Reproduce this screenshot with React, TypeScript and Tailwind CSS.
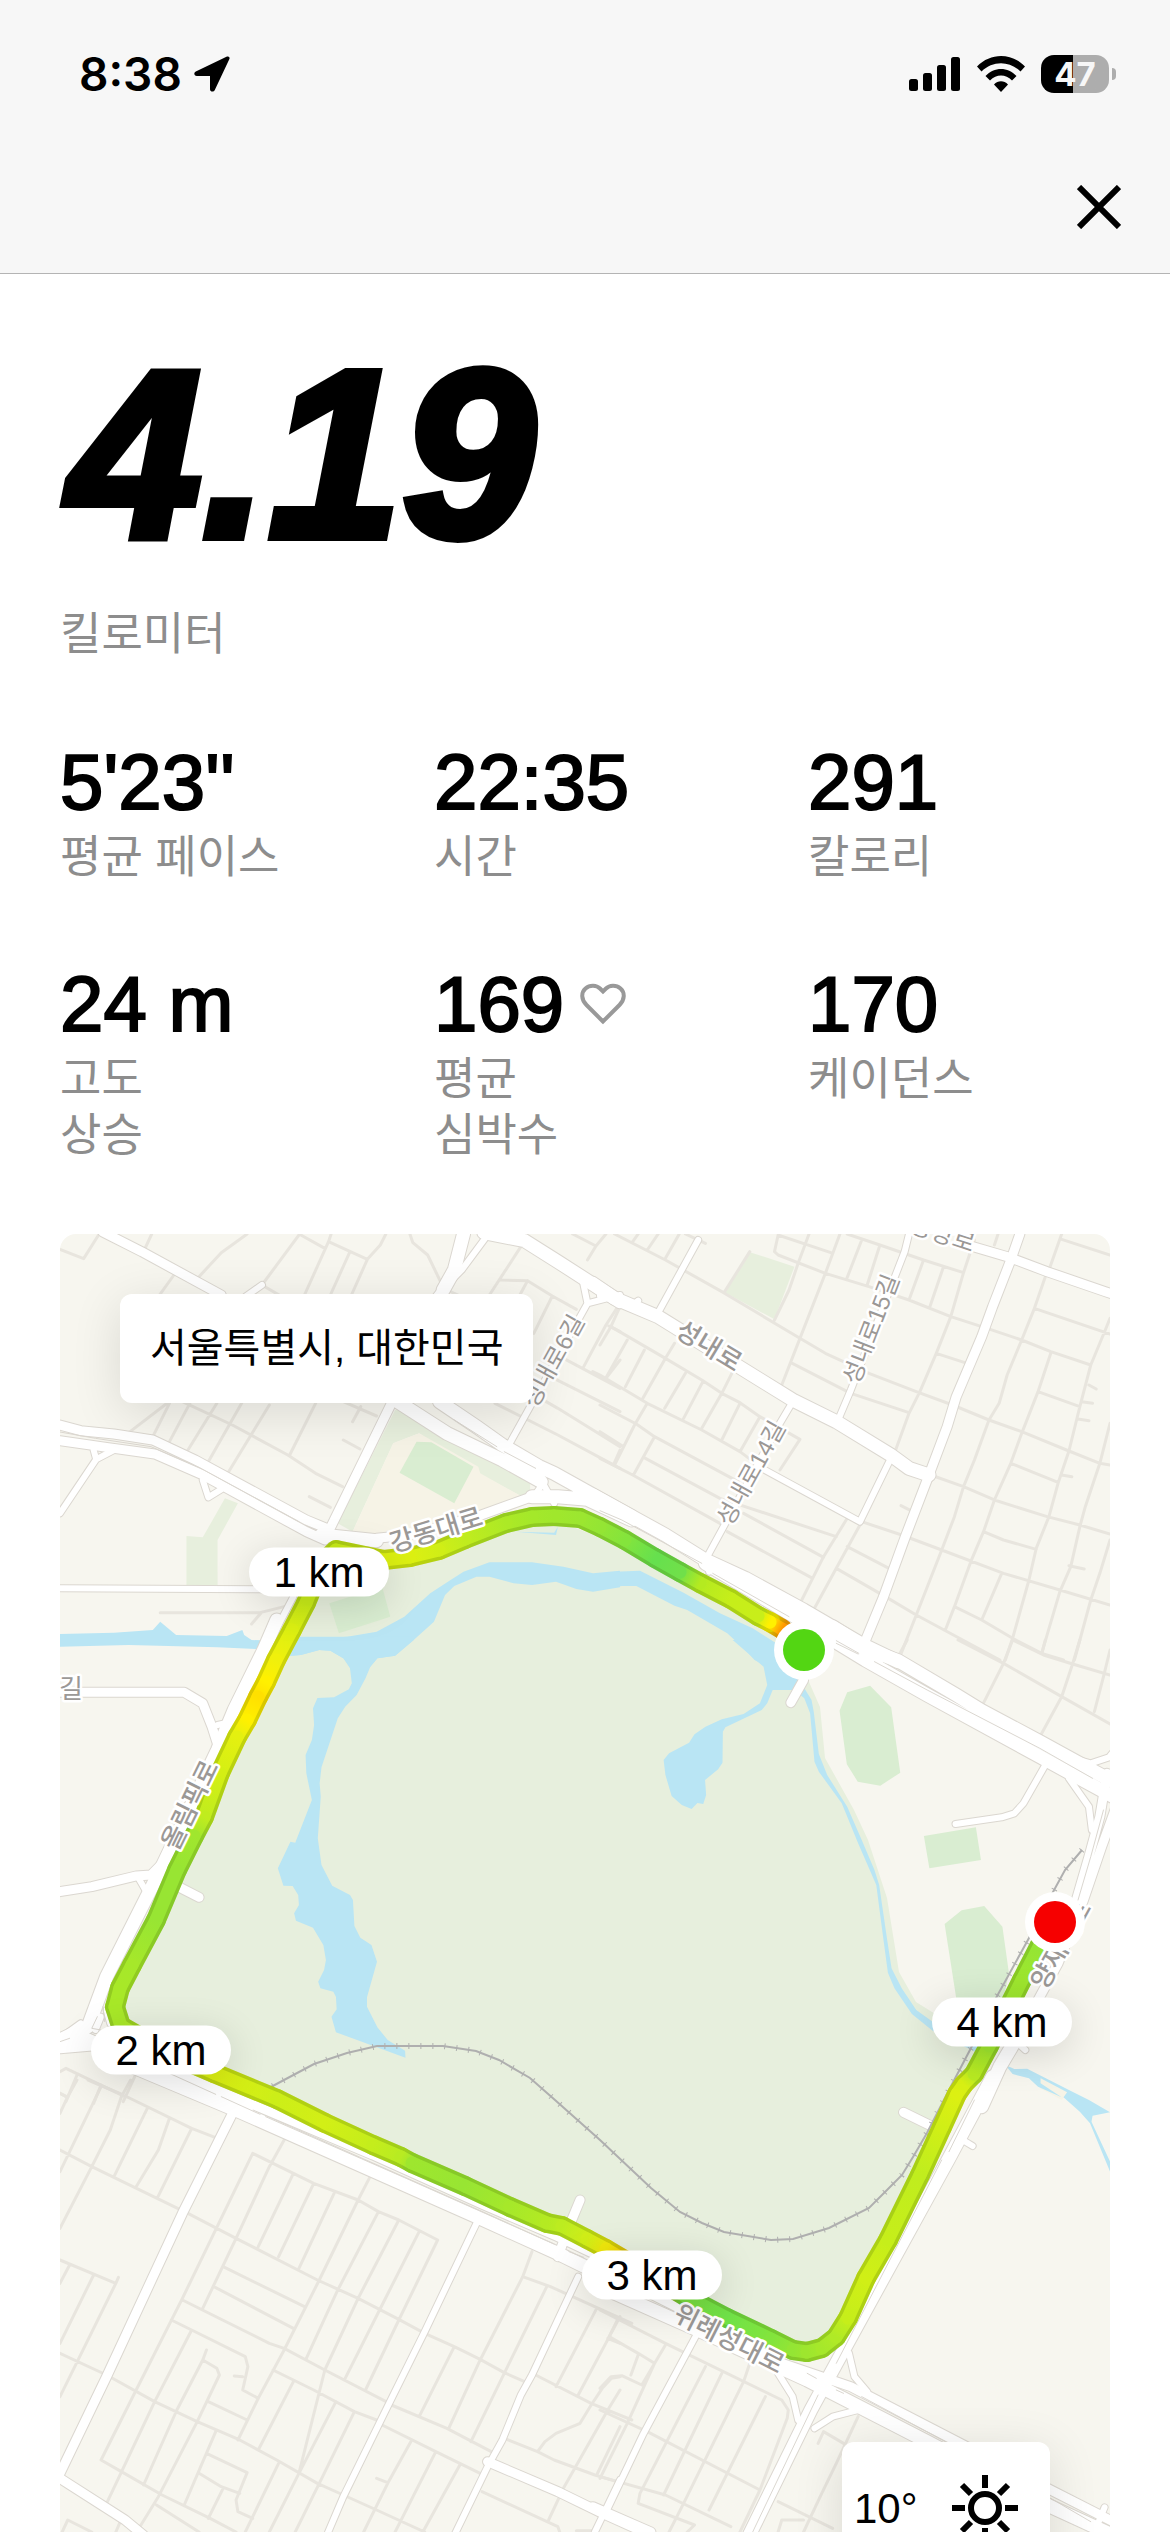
import type { ReactNode } from 'react';

interface Stat {
  value: string;
  label: string[];
  heart?: boolean;
}

interface Tile {
  id: string;
  transform: string;
  park?: string;
  sand?: string;
  field?: string;
  water?: string;
  lane: string;
  small: string;
  medium: string;
  large: string;
  divider?: string;
}

interface RoadLabel {
  text: string;
  x: number;
  y: number;
  angle: number;
  size: number;
  bold?: boolean;
}

const MAP_LEFT = 60;
const MAP_TOP = 1234;
const MAP_WIDTH = 1050;
const MAP_HEIGHT = 1298;

const stats: Stat[] = [
  { value: "5'23''", label: ['평균 페이스'] },
  { value: '22:35', label: ['시간'] },
  { value: '291', label: ['칼로리'] },
  { value: '24 m', label: ['고도', '상승'] },
  { value: '169', label: ['평균', '심박수'], heart: true },
  { value: '170', label: ['케이던스'] },
];

// Each tile keeps its own coordinate system
const tiles: Tile[] = [
  {
    id: 'nw',
    transform: 'translate(40 1220) scale(0.3699 0.33333)',
    park: 'M960,570 1030,575 1100,630 1230,710 1325,775 1325,815 1300,828 1185,760 1025,640 955,670 845,935 805,910Z M500,835 535,850 480,960 480,1095 396,1095 396,948 440,952Z',
    sand: 'M1025,640 1185,740 1190,760 1300,828 1180,880 1000,940 860,940 845,935 955,670Z',
    field: 'M1018,665 1058,667 1172,740 1120,850 972,758Z M782,1150 925,1100 947,1190 808,1240Z',
    water:
      'M54,1242 200,1238 305,1230 325,1205 368,1245 505,1248 547,1230 552,1245 572,1260 660,1263 830,1250 910,1235 985,1190 1055,1120 1110,1080 1145,1055 1215,1027 1330,1027 1415,1040 1495,1060 1568,1052 1568,1102 1495,1115 1450,1107 1395,1085 1330,1095 1280,1090 1215,1070 1180,1070 1120,1098 1095,1125 1065,1205 1008,1262 960,1307 912,1315 893,1340 840,1340 820,1315 785,1292 755,1290 705,1305 670,1308 605,1288 480,1282 240,1275 54,1280Z M1285,935 1390,938 1400,920 1395,945Z',
    lane:
      'M54,88 118,116 160,42 M560,42 490,98 420,182 M302,42 282,90 M362,165 320,230 M702,42 600,195 700,260 M705,45 770,85 M787,42 780,65 715,225 M780,65 885,118 M935,42 920,75 885,118 842,225 M838,95 785,225 M1000,42 1008,68 1048,105 1085,190 M1090,205 1130,225 M1300,80 1215,225 M1245,180 1318,182 1385,228 1450,268 M1318,182 1280,260 M1385,228 1335,340 M1440,42 1503,78 1530,42 M1503,78 1480,120 M1568,250 1530,315 1470,440 M1538,318 1568,335 M1568,420 1530,475 M1390,400 1568,505 M1380,470 1568,575 M1345,530 1400,565 1568,680 M1230,550 1400,645 1568,745 M1568,690 1550,735 M355,540 240,638 M350,550 305,650 M405,550 350,665 M478,550 400,690 M545,550 455,725 M620,555 510,755 M745,550 675,705 M385,545 520,615 670,705 M670,705 745,760 818,800 M845,605 867,560 M820,545 910,588 M820,660 865,687 M728,830 785,862 M325,1178 595,1178 660,1160 M598,1178 572,1212',
    small:
      'M555,230 600,195 M1100,195 1140,150 1210,45 M1465,170 1480,250 1568,225 M1480,250 1390,430 1270,670 M54,880 152,718 M145,690 152,718 200,690 M440,780 455,832 490,808 M1360,790 1335,830 M1360,790 1390,850 M54,1105 610,1108 M685,1130 595,1320',
    medium:
      'M170,36 275,95 490,225 M54,615 110,632 200,642 305,660 420,720 720,900 775,925 M54,662 180,682 310,702 440,765 720,935 770,960 M1085,215 950,550 780,935 M1060,250 1085,215 M910,955 1000,945 1180,890 1330,830',
    large:
      'M1090,210 1120,150 1145,42 M1200,38 1310,62 1400,125 1568,245 M960,540 1100,640 1250,720 1355,785 M1080,545 1180,620 1250,675 1350,740 1390,760 1600,890 M760,945 910,962 M1330,830 1400,830 1480,838 1600,900',
    divider: 'M54,636 150,655 300,680 430,742 700,905 M1120,600 1235,680 M1255,695 1340,745',
  },
  {
    id: 'ne',
    transform: 'translate(600 1220) scale(0.36352 0.33333)',
    park: 'M408,95 535,140 480,298 345,218Z',
    water:
      'M-20,1062 0,1067 40,1055 110,1052 230,1118 330,1180 420,1225 500,1280 500,1360 460,1340 425,1320 400,1290 350,1240 240,1170 205,1157 100,1098 60,1098 -20,1112Z',
    lane:
      'M40,42 180,120 340,218 550,355 620,400 740,460 870,515 970,555 1070,600 1160,635 1290,693 1375,730 1403,735 M105,42 90,65 M160,42 130,90 M218,42 180,115 M235,42 290,70 M412,95 343,215 M575,42 545,130 520,210 480,300 M490,45 635,98 M490,45 480,95 490,105 620,160 740,200 850,240 965,290 1065,325 1160,360 1240,395 1350,435 M660,42 620,160 550,355 500,495 M680,42 770,75 890,120 1000,158 M720,60 678,178 M770,75 735,195 M890,120 850,240 M945,140 907,262 M1030,60 1000,158 965,290 925,400 880,515 850,580 810,700 M525,428 690,520 850,578 M925,400 1010,430 M1095,42 1085,75 M1270,42 1235,150 M1270,58 1403,105 M1225,170 1195,265 1160,360 1120,465 1098,550 1070,600 1030,720 1000,800 975,890 940,990 870,1185 825,1310 M1195,265 1403,342 M1403,295 1390,330 1350,435 1320,560 1290,693 1260,790 1235,890 1200,985 1180,1080 1135,1255 1115,1320 M1240,400 1205,515 1160,640 1130,730 1085,840 1055,935 1020,1025 975,1160 950,1230 M1205,515 1320,560 M1130,730 1260,787 M1055,935 1110,960 1200,988 M1345,495 1365,507 M1325,545 1355,550 M1315,597 1345,602 M1270,765 1298,770 M1290,1037 1332,1047 M1403,610 1375,730 1335,860 1320,920 1295,1040 1265,1115 1215,1300 M910,765 1000,800 1085,840 1230,890 1320,915 1403,942 M720,905 830,945 940,990 1110,1060 1265,1110 1403,1155 M1105,1060 1050,1200 M1403,960 1375,1060 1350,1140 1305,1320 M975,1160 1050,1200 1135,1255 1215,1300 1275,1320 M785,1130 870,1185 1100,1320 M680,980 795,1045 M650,1045 785,1130 M680,895 615,1010 555,1140 M715,915 650,1045 590,1165 M828,857 855,872 M55,260 30,320 0,375 M30,320 180,415 280,480 335,520 385,548 440,590 550,658 495,750 M75,360 18,470 M122,390 70,500 M205,370 180,415 118,535 M235,460 178,565 M283,485 230,595 M365,455 335,520 280,625 M385,550 335,660 M440,590 385,695 M-20,455 0,465 130,550 280,630 385,695 440,740 M130,550 95,615 40,735 M0,555 100,612 150,650 380,785 M0,635 65,680 M150,650 92,765 M125,715 330,835 650,950 M0,715 90,765 330,910 M395,880 615,1012 M350,935 585,1075',
    small:
      'M270,60 158,282 M105,242 90,255 M530,545 495,610 295,1010 300,1055 M440,742 715,905 800,715 M850,42 838,95 690,510 655,600 M0,228 40,225',
    medium:
      'M1155,42 1130,120 1080,260 1050,350 980,530 955,620 905,765 840,950 780,1130 725,1275 M1020,78 1120,110 1230,155 1390,215 1410,222',
    large:
      'M-20,190 40,235 160,290 530,540 650,605 800,705 850,745 905,765 M-20,825 180,945 290,1020 400,1075 560,1170 725,1275 820,1325 M290,1030 520,1180 700,1290 760,1330',
    divider: 'M0,872 60,900 280,1030 M310,1060 520,1190 M650,1262 712,1300',
  },
  {
    id: 'w',
    transform: 'translate(40 1640) scale(0.3699 0.33333)',
    water:
      'M605,-10 605,28 670,48 705,45 755,30 785,32 820,55 838,85 843,130 835,148 795,172 750,174 738,205 741,255 735,300 718,345 720,400 735,480 690,608 677,605 643,685 658,737 683,738 698,765 700,795 687,820 692,842 738,863 766,915 773,960 768,990 752,1025 758,1045 793,1055 800,1070 802,1108 788,1130 800,1177 988,1253 987,1232 940,1200 912,1162 884,1100 884,1072 911,965 896,915 866,893 850,858 846,780 838,765 790,737 761,675 751,595 759,470 756,430 761,382 805,235 825,200 856,165 880,115 893,80 912,55 960,47 1010,0 1010,-10Z',
    lane: 'M54,1295 70,1285 230,1370 M100,1305 70,1385 M260,1300 225,1385 M165,1335 145,1390 M54,1360 75,1372',
    small: 'M480,255 520,245 M265,712 290,760 M150,1170 165,1130 M54,1195 110,1150 M180,1110 190,1150',
    medium:
      'M54,157 390,157 440,190 465,260 485,330 M54,755 140,740 260,708 300,705 340,660 M365,735 430,772',
    large:
      'M640,-60 605,30 525,210 480,330 330,680 180,1010 130,1160 54,1200 M54,1220 140,1212 M120,1195 330,1300 560,1400',
    divider: 'M155,1130 140,1165 165,1170 M54,1205 80,1195 M330,1290 475,1363 M170,1100 175,1145',
  },
  {
    id: 'e',
    transform: 'translate(600 1640) scale(0.36352 0.33333)',
    sand: 'M1212,1315 1290,1358 1270,1380 1210,1345Z',
    field:
      'M680,157 743,137 801,202 826,398 771,437 709,425 679,373 659,212Z M891,588 1034,562 1048,660 906,685Z M948,852 995,811 1057,798 1107,860 1125,1000 1110,1075 980,1075Z',
    water:
      'M365,0 450,80 460,135 440,190 395,222 335,238 290,260 260,283 245,308 190,340 175,360 180,405 197,468 225,495 252,507 268,489 284,492 292,465 289,420 325,388 337,368 338,275 345,262 445,210 460,190 475,150 535,150 562,175 578,220 590,365 602,395 665,490 710,610 760,735 775,860 792,998 810,1045 858,1122 915,1172 1040,1240 1040,1215 915,1145 870,1110 830,1045 802,985 790,900 768,735 755,690 720,600 680,500 625,405 602,342 588,215 582,180 565,150 540,90 500,30 460,0Z M1115,1275 1140,1287 1175,1286 1290,1350 1345,1380 1403,1417 1355,1427 1352,1445 1403,1565 1403,1595 1348,1450 1320,1415 1275,1372 1285,1357 1212,1315 1212,1330 1270,1372 1205,1340 1180,1315 1135,1302Z',
    lane:
      'M845,0 820,50 M985,0 1110,70 1270,170 1403,252 M1135,0 1110,70 1050,200 M1135,0 1220,45 1300,72 1403,105 M1225,0 1215,42 M1320,0 1300,72 1270,170 1210,290 M1403,30 1385,110 1360,215',
    small:
      'M1420,325 1400,352 1350,370 1310,358 M1225,375 1165,490 1140,520 1105,532 978,552 M1290,415 1345,500 1353,570 M1155,1215 1170,1230',
    medium:
      'M525,188 560,120 M1395,400 1375,530 1345,650 1305,800 1270,900 M1420,500 1380,620 1330,780 1260,970 1150,1190',
    large:
      'M640,-40 740,30 820,62 980,165 1050,212 1210,305 1310,365 1420,430 M640,0 730,60 900,165 1210,350 1420,475 M1160,1170 1100,1280 1050,1400',
    divider: 'M755,65 900,150 1210,325 1355,415 M650,10 710,42 M1385,510 1350,650 1315,780',
  },
  {
    id: 'sw',
    transform: 'translate(40 2080) scale(0.3699 0.33333)',
    lane:
      'M100,0 75,50 54,100 M54,40 75,52 M54,210 140,260 400,400 530,475 750,600 860,655 970,718 1040,760 1120,800 1190,838 1255,878 1310,905 M130,0 225,45 410,145 480,175 M165,20 54,275 M245,0 220,50 190,150 140,260 54,445 M290,85 200,290 M350,115 320,210 260,320 M410,145 318,352 M575,220 385,655 260,930 165,1140 220,1175 330,1245 460,1315 530,1356 M575,220 685,280 740,310 860,360 915,395 970,420 1075,480 970,720 880,930 M660,180 620,260 530,475 440,685 M685,280 590,500 M740,310 645,530 M795,340 700,565 M890,295 860,360 755,600 660,810 590,955 535,1080 M915,395 805,630 720,835 M970,420 860,655 770,870 700,1180 M1025,455 918,690 825,895 M495,560 715,680 M470,620 685,745 M385,660 620,790 660,805 770,870 945,970 M355,720 410,750 555,830 562,860 548,930 590,955 M525,888 548,890 M410,750 310,965 180,1270 M450,810 440,840 478,865 485,885 425,1025 320,1250 270,1340 M440,840 370,990 280,1215 M455,965 560,1020 M630,870 740,930 850,995 910,1020 M685,905 590,1110 M800,965 700,1180 620,1356 M850,995 755,1210 690,1356 M54,820 180,885 310,965 425,1025 540,1080 640,1140 750,1210 820,1245 910,1290 1040,1356 M54,540 205,610 212,592 M80,555 54,610 M145,585 54,790 M205,610 54,950 M475,1055 390,1275 M450,1120 560,1178 530,1260 535,1295 575,1315 M430,1180 490,1220 540,1240 M495,1225 455,1315 M645,1150 555,1356 M315,1275 430,1356 M60,1356 75,1320 140,1356 M215,1330 205,1356 M1330,515 1305,590 1190,840 1105,1045 M1370,620 1255,880 1165,1085 M1305,590 1380,620 1600,730 M1120,800 1025,1010 M950,975 1100,1045 1220,1115 M925,1035 1070,1115 1190,1180 M1005,1080 940,1210 875,1356 M1070,1115 960,1356 M1135,1155 1035,1356 M910,1195 940,1208 M1505,685 1395,920 M1568,710 1455,945 M1535,775 1568,790 M1340,885 1490,970 1600,1020 M1568,890 1545,895 1520,925 1490,975 1460,1030 1395,1060 1365,1085 1345,1115 M1568,930 1535,990 1415,1225 1375,1320 M1255,1075 1345,1115 1390,1140 1500,1185 1560,1205 M1568,1040 1505,1185 M1195,1235 1400,1340 1405,1356 M1450,1352 1500,1352',
    small:
      'M1180,430 1040,755 935,990 820,1250 770,1380 M1455,590 1330,885 1300,945 1250,1080 1210,1160 1120,1366 M1568,1200 1500,1356',
    medium:
      'M525,90 385,400 180,890 54,1180 M54,1195 230,1320 280,1366 M1210,1145 1400,1235 1520,1300 1620,1350 M1460,360 1430,440 1400,530 M330,-40 600,85 900,225 1200,375 1400,470 1600,575',
    large: 'M250,-40 540,95 1180,410 1400,520 1620,640',
    divider: 'M610,110 1000,300 1390,492 M1430,515 1470,532 M490,50 595,103',
  },
  {
    id: 'se',
    transform: 'translate(600 2080) scale(0.36352 0.33333)',
    lane:
      'M0,690 180,790 500,960 518,990 515,1015 M50,715 25,770 105,820 150,850 M105,825 85,885 M150,850 75,1030 0,1195 M0,925 30,890 60,887 115,915 M180,795 115,915 M290,860 110,1240 105,1270 260,1335 240,1356 M335,880 175,1245 M415,840 395,905 230,1270 190,1356 M455,950 300,1290 M515,1015 440,1230 385,1356 M0,990 130,1055 440,1230 M0,1190 180,1245 360,1340 M600,1090 615,1055 670,1090 M710,1010 650,1150 610,1240 560,1356 M490,1265 640,1345 M490,1356 500,1320 560,1320',
    small:
      'M270,755 120,1060 15,1300 M685,820 700,890 735,935 M490,880 530,950 545,1020 M590,1045 640,1010 710,990 M1005,185 1025,198 M1388,1282 1370,1330',
    medium: 'M835,97 925,145 M-20,1280 140,1356 M0,565 300,730 500,850 690,920 1000,1095 1240,1230 1420,1330',
    large:
      'M1080,-10 960,235 650,850 580,990 395,1400 M0,620 300,765 570,900 900,1085 1240,1280 1420,1370',
    divider:
      'M1030,60 960,215 M940,240 650,850 M600,945 420,1356 M570,880 595,895 M650,930 670,940 M720,950 950,1085 M1240,1255 1350,1325',
  },
];

const park =
  'M804,1650 731,1605 620,1545 560,1522 506,1528 410,1562 335,1560 288,1640 203,1820 118,1995 130,2040 277,2095 412,2160 562,2222 691,2297 805,2350 845,2325 958,2093 1003,2020 945,2020 916,2002 899,1972 887,1898 868,1840 854,1810 825,1758 820,1707 809,1682Z';

const railway =
  'M1082,1850 1065,1870 1053,1892 1029,1938 996,1998 971,2048 949,2090 927,2133 913,2157 902,2175 887,2190 869,2208 829,2228 793,2239 771,2240 724,2232 702,2223 680,2212 651,2188 600,2140 555,2100 530,2078 499,2060 476,2051 443,2046 377,2046 347,2053 314,2064 269,2088';

// [x, y, pace colour]
const route: [number, number, string][] = [
  [804, 1650, '#ff7a00'],
  [782, 1629, '#ff9800'],
  [770, 1622, '#fff000'],
  [758, 1616, '#c8ee1a'],
  [731, 1599, '#c6ee1a'],
  [700, 1583, '#b4ea20'],
  [680, 1572, '#70e04a'],
  [655, 1558, '#66e04e'],
  [625, 1540, '#84e43c'],
  [600, 1527, '#94e534'],
  [580, 1518, '#9ce630'],
  [554, 1516, '#a0e72c'],
  [532, 1517, '#a4e82a'],
  [506, 1523, '#ace926'],
  [465, 1539, '#c0ec1e'],
  [439, 1550, '#d0ee16'],
  [410, 1557, '#dcf012'],
  [384, 1560, '#dcf012'],
  [336, 1550, '#c8ec18'],
  [323, 1562, '#c8ec18'],
  [306, 1603, '#c8ec18'],
  [292, 1630, '#dcf012'],
  [276, 1660, '#f0f00c'],
  [266, 1682, '#fff000'],
  [258, 1697, '#ffe000'],
  [247, 1720, '#fff000'],
  [237, 1737, '#e4f010'],
  [220, 1773, '#d4ef14'],
  [204, 1817, '#c0ec1e'],
  [194, 1836, '#a0e62e'],
  [177, 1870, '#98e533'],
  [156, 1920, '#98e533'],
  [132, 1965, '#a6e82a'],
  [120, 1988, '#a8e828'],
  [115, 2007, '#a8e828'],
  [121, 2026, '#a8e828'],
  [170, 2054, '#d0ee18'],
  [214, 2073, '#dcf012'],
  [277, 2099, '#ccee18'],
  [325, 2123, '#d2ef16'],
  [373, 2145, '#c4ed1c'],
  [401, 2157, '#b8eb22'],
  [412, 2163, '#9ee62e'],
  [465, 2186, '#98e533'],
  [510, 2207, '#a6e82a'],
  [547, 2223, '#b4ea22'],
  [562, 2226, '#bcec20'],
  [587, 2239, '#d0ee18'],
  [606, 2249, '#f0e80c'],
  [650, 2275, '#ff9800'],
  [685, 2296, '#7ade40'],
  [727, 2318, '#70e248'],
  [771, 2339, '#82e43c'],
  [793, 2350, '#94e534'],
  [807, 2352, '#9ee62e'],
  [822, 2348, '#a6e82a'],
  [836, 2337, '#b0ea26'],
  [848, 2318, '#c6ee1a'],
  [866, 2278, '#d0ef16'],
  [888, 2240, '#c6ee1a'],
  [920, 2175, '#c0ed1e'],
  [942, 2127, '#d0ef16'],
  [957, 2094, '#dcf012'],
  [964, 2084, '#d8f014'],
  [974, 2074, '#b8eb22'],
  [989, 2046, '#9ee62e'],
  [1003, 2018, '#9ce630'],
  [1022, 1980, '#9ee62e'],
  [1040, 1945, '#94e534'],
  [1055, 1922, '#94e534'],
];

const roadLabels: RoadLabel[] = [
  { text: '강동대로', x: 436, y: 1530, angle: -17, size: 26, bold: true },
  { text: '성내로6길', x: 553, y: 1361, angle: -61, size: 24 },
  { text: '성내로', x: 709, y: 1346, angle: 31, size: 26, bold: true },
  { text: '성내로15길', x: 871, y: 1329, angle: -69, size: 24 },
  { text: '성내로14길', x: 751, y: 1473, angle: -61, size: 24 },
  { text: '중앙로', x: 943, y: 1234, angle: 18, size: 24 },
  { text: '길', x: 71, y: 1689, angle: 0, size: 26 },
  { text: '올림픽로', x: 190, y: 1805, angle: -64, size: 26, bold: true },
  { text: '위례성대로', x: 729, y: 2339, angle: 27, size: 26, bold: true },
  { text: '양재대로', x: 1061, y: 1945, angle: -61, size: 26, bold: true },
];

const distanceMarkers = [
  { text: '1 km', x: 319, y: 1572 },
  { text: '2 km', x: 161, y: 2050 },
  { text: '3 km', x: 652, y: 2275 },
  { text: '4 km', x: 1002, y: 2022 },
];

const mapPosition = (x: number, y: number) => ({
  left: `${((x - MAP_LEFT) / MAP_WIDTH) * 100}%`,
  top: `${((y - MAP_TOP) / MAP_HEIGHT) * 100}%`,
});

const routePath = 'M' + route.map(([x, y]) => `${x},${y}`).join(' ');

function StatusBar() {
  return (
    <div className="flex items-center justify-between pt-[46px] pr-[54px] pl-[79px]">
      <div className="flex items-center gap-3">
        <span className="font-[Inter,sans-serif] text-[46px] leading-[56px] font-semibold">8:38</span>
        <svg className="h-9 w-9" viewBox="0 0 36 36" aria-hidden="true">
          <path d="M33 .6 1.800 15.400C-.6 16.600 0 20 2.800 20H16V33.200C16 36 19.600 36.500 20.800 34L35.400 3C36 1.300 34.800 -.2 33 .6Z" />
        </svg>
      </div>
      <div className="flex items-center gap-4">
        <svg className="h-[34px] w-[52px]" viewBox="0 0 52 34" aria-hidden="true">
          <rect x="0" y="22" width="9" height="12" rx="2.5" />
          <rect x="14" y="16" width="9" height="18" rx="2.5" />
          <rect x="28" y="8" width="9" height="26" rx="2.5" />
          <rect x="42" y="0" width="9" height="34" rx="2.5" />
        </svg>
        <svg className="h-9 w-12" viewBox="0 0 48 36" aria-hidden="true">
          <path d="M0 10.500C13.500-3.500 34.500-3.500 48 10.500L43.500 15.500C32.500 4.500 15.500 4.500 4.500 15.500Z" />
          <path d="M8.500 20C17 10.500 31 10.500 39.500 20L35 24.500C28.500 17.800 19.500 17.800 13 24.500Z" />
          <path d="M17 28.500C21 24.200 27 24.200 31 28.500L24 36Z" />
        </svg>
        <div className="flex items-center gap-[3px]">
          <div className="flex h-[38px] w-[68px] items-center justify-center rounded-[13px] bg-linear-to-r from-black from-47% to-[#adadad] to-47% font-[Inter,sans-serif] text-[33px] leading-[38px] font-bold text-[#f7f7f7]">
            47
          </div>
          <div className="h-3 w-1 rounded-r-full bg-[#adadad]" />
        </div>
      </div>
    </div>
  );
}

function Pill({ children }: { children: ReactNode }) {
  return (
    <div className="flex h-[49px] w-[140px] items-center justify-center rounded-full bg-white text-[42px] leading-[49px] shadow-[0_8px_40px_rgba(0,0,0,0.14)]">
      {children}
    </div>
  );
}

function RouteLine() {
  return (
    <g fill="none" strokeLinecap="round" strokeLinejoin="round">
      <defs>
        {route.slice(1).map(([x, y, color], i) => (
          <linearGradient
            key={i}
            id={`pace-${i}`}
            gradientUnits="userSpaceOnUse"
            x1={route[i][0]}
            y1={route[i][1]}
            x2={x}
            y2={y}
          >
            <stop offset="0" stopColor={route[i][2]} />
            <stop offset="1" stopColor={color} />
          </linearGradient>
        ))}
      </defs>
      {[20, 13].map((width) => (
        <g key={width} strokeWidth={width}>
          {route.slice(1).map(([x, y], i) => (
            <path key={i} d={`M${route[i][0]},${route[i][1]} ${x},${y}`} stroke={`url(#pace-${i})`} />
          ))}
          {width === 20 && <path d={routePath} stroke="#3c5a00" strokeOpacity="0.2" />}
        </g>
      ))}
    </g>
  );
}

function MapCanvas() {
  // 같은 레이어끼리 모아서 그려야 타일 경계가 보이지 않는다
  const layer = (draw: (tile: Tile) => ReactNode) =>
    tiles.map((tile) => (
      <g key={tile.id} transform={tile.transform}>
        {draw(tile)}
      </g>
    ));
  const road = (d: string, width: number, color: string) => (
    <path d={d} stroke={color} strokeWidth={width} vectorEffect="non-scaling-stroke" />
  );

  return (
    <svg
      className="block w-full"
      viewBox={`${MAP_LEFT} ${MAP_TOP} ${MAP_WIDTH} ${MAP_HEIGHT}`}
      role="img"
      aria-label="러닝 경로"
    >
      <rect x={MAP_LEFT} y={MAP_TOP} width={MAP_WIDTH} height={MAP_HEIGHT} fill="#f7f6ef" />
      <path d={park} fill="#e7efdd" />
      {layer((tile) => (
        <>
          {tile.park && <path d={tile.park} fill="#e7efdd" />}
          {tile.sand && <path d={tile.sand} fill="#f6f3e6" />}
          {tile.field && <path d={tile.field} fill="#d9edd1" />}
          {tile.water && <path d={tile.water} fill="#b9e5f4" fillRule="evenodd" />}
        </>
      ))}
      <g fill="none" strokeLinejoin="round" strokeLinecap="round">
        {layer((tile) => road(tile.lane, 3, '#e8e5de'))}
        {layer((tile) => (
          <>
            {road(tile.small, 8, '#dbd7d0')}
            {road(tile.medium, 11, '#dbd7d0')}
            {road(tile.large, 15, '#dbd7d0')}
          </>
        ))}
        {layer((tile) => (
          <>
            {road(tile.small, 6, '#ffffff')}
            {road(tile.medium, 9, '#ffffff')}
            {road(tile.large, 13, '#ffffff')}
          </>
        ))}
        {layer((tile) => tile.divider && road(tile.divider, 1, '#dbd7d0'))}
      </g>
      <g fill="none" stroke="#afafaf">
        <path d={railway} strokeWidth="2" />
        <path d={railway} strokeWidth="6" strokeDasharray="1 11" />
      </g>
      <RouteLine />
      {roadLabels.map((label) => (
        <text
          key={label.text}
          transform={`translate(${label.x} ${label.y}) rotate(${label.angle})`}
          textAnchor="middle"
          dominantBaseline="central"
          fontSize={label.size}
          fill="#9b9896"
          stroke="#ffffff"
          strokeWidth="5"
          strokeLinejoin="round"
          paintOrder="stroke"
          className={label.bold ? 'font-medium' : 'font-normal'}
        >
          {label.text}
        </text>
      ))}
      <circle cx="804" cy="1650" r="30" fill="#ffffff" />
      <circle cx="804" cy="1650" r="21" fill="#53d613" />
      <circle cx="1055" cy="1922" r="30" fill="#ffffff" />
      <circle cx="1055" cy="1922" r="21" fill="#f60000" />
    </svg>
  );
}

export default function App() {
  return (
    <div className="min-h-screen overflow-x-hidden bg-white font-['Liberation_Sans','Noto_Sans_CJK_KR',sans-serif] text-black">
      {/* 헤더 */}
      <header className="border-b border-[#b4b4b4] bg-[#f7f7f7] pb-11">
        <StatusBar />
        <div className="flex justify-end pt-[83px] pr-[49px]">
          <button type="button" aria-label="닫기" className="block">
            <svg className="h-11 w-11" viewBox="0 0 44 44" fill="none" stroke="currentColor" strokeWidth="6">
              <path d="M2 2 42 42M42 2 2 42" />
            </svg>
          </button>
        </div>
      </header>

      <main>
        <section className="px-[60px] pt-20">
          <h1 className="pl-2 text-[240px] leading-[200px] font-bold italic [-webkit-text-stroke:8px_black]">4.19</h1>
          <p className="mt-[53px] text-[45px] leading-[56px] text-[#8d8d8d]">킬로미터</p>
        </section>

        {/* 기록 */}
        <section className="mt-[79px] grid grid-cols-3 gap-x-3 gap-y-[78px] pl-[60px]">
          {stats.map((stat) => (
            <div key={stat.label.join(' ')}>
              <div className="flex items-center gap-4 text-[78px] leading-[80px] [-webkit-text-stroke:2px_black]">
                {stat.value}
                {stat.heart && (
                  <svg
                    className="h-[42px] w-[46px]"
                    viewBox="0 0 46 42"
                    fill="none"
                    stroke="#999999"
                    strokeWidth="4"
                    strokeLinejoin="miter"
                    aria-hidden="true"
                  >
                    <path d="M23 38.500 6.500 22C1 16.500 1 9.500 5.500 5.500 10 1.500 16.500 2 20 5.500L23 8.500 26 5.500C29.500 2 36 1.500 40.500 5.500 45 9.500 45 16.500 39.500 22Z" />
                  </svg>
                )}
              </div>
              <div className="mt-2 text-[45px] leading-[56px] text-[#8d8d8d]">
                {stat.label.map((line) => (
                  <p key={line}>{line}</p>
                ))}
              </div>
            </div>
          ))}
        </section>

        {/* 지도 */}
        <section className="relative mx-[60px] mt-[70px] overflow-hidden rounded-t-2xl">
          <MapCanvas />
          {distanceMarkers.map((marker) => (
            <div
              key={marker.text}
              className="absolute -translate-x-1/2 -translate-y-1/2"
              style={mapPosition(marker.x, marker.y)}
            >
              <Pill>{marker.text}</Pill>
            </div>
          ))}
          <div className="absolute top-[60px] left-[60px] rounded-xl bg-white px-[30px] py-[26px] text-[40px] leading-[57px] shadow-[0_10px_50px_rgba(0,0,0,0.12)]">
            서울특별시, 대한민국
          </div>
          <div className="absolute top-[1208px] right-[60px] flex h-[132px] w-[208px] items-center justify-between rounded-xl bg-white pr-8 pl-3 text-[42px] shadow-[0_10px_50px_rgba(0,0,0,0.12)]">
            <span>10°</span>
            <svg className="h-[66px] w-[66px]" viewBox="0 0 66 66" fill="none" stroke="black" strokeWidth="6" aria-hidden="true">
              <circle cx="33" cy="33" r="14" />
              <path d="M33 0V13M33 53V66M0 33H13M53 33H66M10 10 19 19M47 47 56 56M56 10 47 19M19 47 10 56" />
            </svg>
          </div>
        </section>
      </main>
    </div>
  );
}
